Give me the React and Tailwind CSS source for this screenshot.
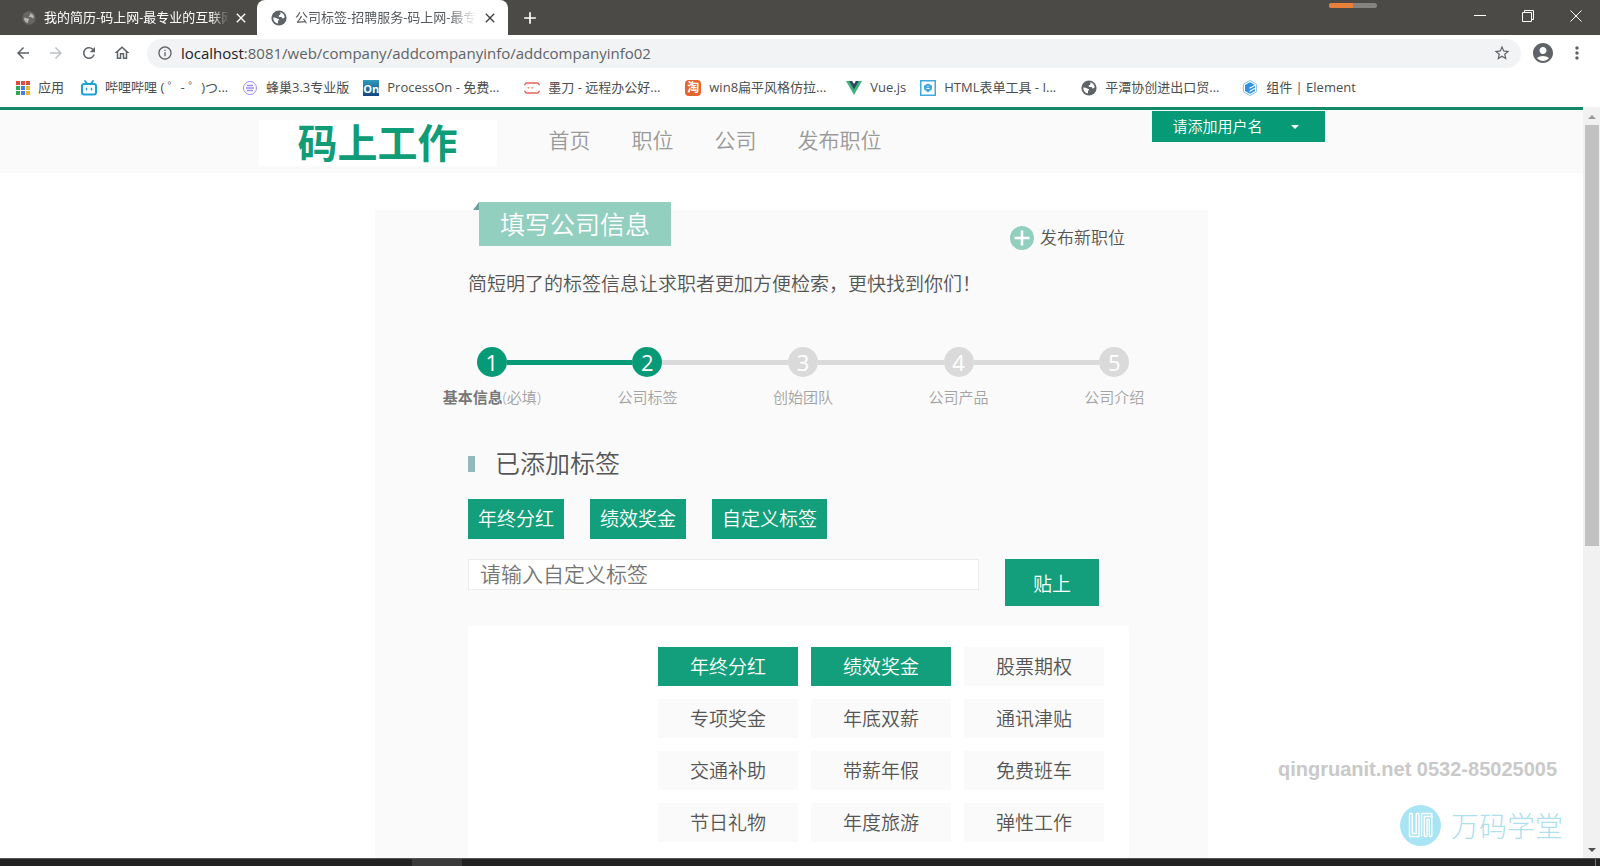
import React from "react";
import {
  MdArrowBack, MdArrowForward, MdRefresh, MdOutlineHome, MdInfoOutline,
  MdStarBorder, MdAccountCircle, MdMoreVert, MdClose, MdAdd,
} from "react-icons/md";

function Globe({ className }) {
  return (
    <svg viewBox="0 0 16 16" className={className} aria-hidden="true">
      <circle cx="8" cy="8" r="7.6" fill="currentColor" />
      <path d="M8.6 2.2c2.8.2 4.8 2.4 5.2 5-.9.3-1.2 1.300-2.100 1.200-.7-.1-.6-1.200-1.300-1.400-1-.2-1.600.2-2.400-.3-.7-.500-.1-1.400.6-1.600.6-.2.5-.9 1-1.400.4-.5-.5-.9-1-1.500z" fill="white" />
      <path d="M2.200 7.600c1.200.2 3 .2 4 .8.900.500 1.800.3 1.900 1.200.100.900-1 .8-1.100 1.600-.1.900.3 1.500-.3 2.400C4 13.100 2.200 10.600 2.200 7.600z" fill="white" />
    </svg>
  );
}

function AppsIcon() {
  const colors = ["#e04a3f", "#e04a3f", "#e04a3f", "#35a35a", "#3f7fe8", "#f2b32a", "#35a35a", "#3f7fe8", "#f2b32a"];
  return (
    <svg viewBox="0 0 14 14" className="size-3.5 shrink-0" aria-hidden="true">
      {colors.map((c, i) => (
        <rect key={i} x={(i % 3) * 5} y={Math.floor(i / 3) * 5} width="4" height="4" fill={c} />
      ))}
    </svg>
  );
}

function BiliIcon() {
  return (
    <svg viewBox="0 0 16 16" className="size-4" fill="none" stroke="#1aa3d4" strokeLinecap="round" aria-hidden="true">
      <rect x="1" y="4" width="14" height="10.500" rx="2" strokeWidth="2" />
      <path d="M4 1l2 2.500M12 1l-2 2.500" strokeWidth="1.800" />
      <path d="M5.500 8.500v1.200M10.500 8.500v1.200" strokeWidth="1.600" />
    </svg>
  );
}

function HiveIcon() {
  return (
    <svg viewBox="0 0 16 16" className="size-4" fill="none" stroke="#9d8ff2" aria-hidden="true">
      <circle cx="8" cy="8" r="6.500" />
      <path d="M5 5.500h6M4 8h8M5 10.500h6" strokeWidth="1.300" />
    </svg>
  );
}

function OnIcon() {
  return (
    <span className="flex size-4 items-center justify-center bg-linear-to-b from-[#2e9bbd] to-[#17457f] text-[11px] font-bold leading-none text-white">On</span>
  );
}

function ModaoIcon() {
  return (
    <svg viewBox="0 0 16 16" className="size-4" fill="none" stroke="#e8625c" strokeWidth="1.300" strokeLinecap="round" aria-hidden="true">
      <path d="M.8 4.800C1.200 3.500 2 3 3.200 3h9.600c1.200 0 2 .5 2.400 1.800M.8 11.200C1.200 12.500 2 13 3.200 13h9.600c1.200 0 2-.5 2.400-1.800M4 7.800h.6M8 7.800h.6" />
    </svg>
  );
}

function TaoIcon() {
  return (
    <span className="flex size-4 items-center justify-center rounded-sm bg-[#e8632c] text-xs font-bold leading-none text-white">淘</span>
  );
}

function VueIcon() {
  return (
    <svg viewBox="0 0 16 16" className="size-4" aria-hidden="true">
      <path d="M0 1h16L8 15z" fill="#3fb27f" />
      <path d="M3.200 1h9.600L8 9.400z" fill="#34495e" />
      <path d="M6.200 1h3.600L8 4z" fill="white" />
    </svg>
  );
}

function FormIcon() {
  return (
    <svg viewBox="0 0 16 16" className="size-4" fill="none" stroke="#3fa9e0" aria-hidden="true">
      <rect x=".75" y=".75" width="14.500" height="14.500" strokeWidth="1.500" />
      <path d="M8 4l3.500 1.800v3.400L8 12 4.500 9.200V5.800z" fill="#3fa9e0" />
      <path d="M6.500 8.500h3M8 6v1.200" stroke="white" />
    </svg>
  );
}

function ElementIcon() {
  return (
    <svg viewBox="0 0 16 16" className="size-4" aria-hidden="true">
      <path d="M8 .5l6.600 3.700v7.600L8 15.500l-6.600-3.700V4.200z" fill="none" stroke="#7cc3f5" />
      <path d="M8 2.200l5 2.900v5.800l-5 2.900-5-2.900V5.100z" fill="#2f8fe0" />
      <path d="M7.500 8.300l6-3.400M7.500 11.400l6-3.400" stroke="white" strokeWidth="1.200" />
    </svg>
  );
}

const bookmarks = [
  { icon: <BiliIcon />, text: "哔哩哔哩 ( ゜- ゜)つ...", wide: true },
  { icon: <HiveIcon />, text: "蜂巢3.3专业版" },
  { icon: <OnIcon />, text: "ProcessOn - 免费...", wide: true },
  { icon: <ModaoIcon />, text: "墨刀 - 远程办公好...", wide: true },
  { icon: <TaoIcon />, text: "win8扁平风格仿拉...", wide: true },
  { icon: <VueIcon />, text: "Vue.js" },
  { icon: <FormIcon />, text: "HTML表单工具 - I...", wide: true },
  { icon: <Globe className="size-4 text-[#5f6368]" />, text: "平潭协创进出口贸...", wide: true },
  { icon: <ElementIcon />, text: "组件 | Element" },
];

function TabStrip() {
  return (
    <div className="relative flex h-[35px] shrink-0 items-stretch bg-[#4b4a47] text-[13px]">
      <div className="flex w-[257px] items-center pl-[22px] pr-2 text-white">
        <Globe className="size-3.5 shrink-0 text-[#7b7a78] opacity-60" />
        <span className="ml-2 flex-1 overflow-hidden whitespace-nowrap mask-r-from-90%">我的简历-码上网-最专业的互联网</span>
        <button aria-label="关闭标签页" className="ml-1"><MdClose className="size-4" /></button>
      </div>
      <div className="flex w-[251px] items-center rounded-t-lg bg-white pl-3.5 pr-2.5 text-[#55585c]">
        <Globe className="size-4 shrink-0 text-[#5f6368]" />
        <span className="ml-2 flex-1 overflow-hidden whitespace-nowrap mask-r-from-85%">公司标签-招聘服务-码上网-最专</span>
        <button aria-label="关闭标签页" className="ml-1.5 text-[#3c4043]"><MdClose className="size-4" /></button>
      </div>
      <button aria-label="新标签页" className="ml-3 text-white"><MdAdd className="size-5" /></button>
      <div className="absolute right-[223px] top-[3px] flex h-[5px] w-12 overflow-hidden rounded-full bg-[#85837f]">
        <span className="w-1/2 bg-[#e8803c]" />
      </div>
      <div className="ml-auto flex items-center gap-9 pb-1 pr-[18px] text-white">
        <button aria-label="最小化">
          <svg viewBox="0 0 12 12" className="size-3" stroke="currentColor"><path d="M0 5.500h12" /></svg>
        </button>
        <button aria-label="还原">
          <svg viewBox="0 0 12 12" className="size-3" stroke="currentColor" fill="none"><path d="M.5 2.500h9v9h-9zM2.500 2.500v-2h9v9h-2" /></svg>
        </button>
        <button aria-label="关闭">
          <svg viewBox="0 0 12 12" className="size-3" stroke="currentColor"><path d="M.5.5l11 11M11.500.5l-11 11" /></svg>
        </button>
      </div>
    </div>
  );
}

function Toolbar() {
  return (
    <div className="flex h-9 shrink-0 items-center bg-white pl-3.5 pr-[13px] text-[#5f6368]">
      <div className="flex items-center gap-[15px]">
        <button aria-label="后退"><MdArrowBack className="size-[18px]" /></button>
        <button aria-label="前进" className="text-[#bdc1c6]"><MdArrowForward className="size-[18px]" /></button>
        <button aria-label="重新加载"><MdRefresh className="size-[18px]" /></button>
        <button aria-label="主页"><MdOutlineHome className="size-[18px]" /></button>
      </div>
      <div className="ml-4 flex h-[29px] flex-1 items-center rounded-full bg-[#f1f3f4] pl-2.5 pr-2.5">
        <MdInfoOutline className="size-4 shrink-0" />
        <span className="ml-2 flex-1 text-[15px]"><span className="text-[#202124]">localhost</span>:8081/web/company/addcompanyinfo/addcompanyinfo02</span>
        <button aria-label="收藏"><MdStarBorder className="size-[18px]" /></button>
      </div>
      <button aria-label="用户" className="ml-2.5"><MdAccountCircle className="size-6" /></button>
      <button aria-label="菜单" className="ml-3"><MdMoreVert className="size-5" /></button>
    </div>
  );
}

function BookmarkBar() {
  return (
    <nav className="flex h-9 shrink-0 items-center overflow-hidden whitespace-nowrap bg-white pb-0.5 pl-4 text-[13px] text-[#4a4d51]">
      <a href="#apps" className="flex w-[65px] shrink-0 items-center gap-2"><AppsIcon />应用</a>
      {bookmarks.map((b) => (
        <a key={b.text} href="#bookmark" className={b.wide ? "flex w-[161px] shrink-0 items-center gap-2" : "flex shrink-0 items-center gap-2 pr-3.5"}>
          <span className="shrink-0">{b.icon}</span>{b.text}
        </a>
      ))}
    </nav>
  );
}

function SiteHeader() {
  return (
    <header className="border-t-[3px] border-[#128a66] bg-[#fafafa]">
      <div className="mx-auto flex h-[63px] max-w-[1066px] items-start">
        <a href="#home" className="mt-2.5 flex h-[46px] w-[238px] items-center justify-center bg-white text-[40px] font-bold leading-none text-[#0f9c76]">码上工作</a>
        <nav className="ml-[52px] mt-3 flex gap-[41px] text-[21px] leading-9 text-[#999]">
          <a href="#home">首页</a>
          <a href="#jobs">职位</a>
          <a href="#companies">公司</a>
          <a href="#publish">发布职位</a>
        </nav>
        <button className="ml-auto mt-px flex h-[31px] w-[173px] items-center bg-[#079a77] pl-[21px] text-[15px] text-white">
          请添加用户名
          <svg viewBox="0 0 8 4" className="ml-7 h-1 w-2" fill="currentColor" aria-hidden="true"><path d="M0 0h8L4 4z" /></svg>
        </button>
      </div>
    </header>
  );
}

const steps = [
  { label: <><b className="font-bold text-[#777]">基本信息</b>(必填)</>, done: true },
  { label: "公司标签", done: true },
  { label: "创始团队" },
  { label: "公司产品" },
  { label: "公司介绍" },
];

function Steps() {
  return (
    <ol className="ml-[39px] mr-4 mt-[49px] grid grid-cols-5">
      {steps.map((s, i) => (
        <li key={i} className="flex flex-col items-center">
          <div className="flex w-full items-center">
            <span className={i === 0 ? "h-[5px] flex-1" : i === 1 ? "h-[5px] flex-1 bg-[#079a77]" : "h-[5px] flex-1 bg-[#dadada]"} />
            <span className={s.done ? "flex size-[30px] items-center justify-center rounded-full bg-[#079a77] text-[22px] font-medium leading-none text-white" : "flex size-[30px] items-center justify-center rounded-full bg-[#dadada] text-[22px] font-medium leading-none text-white"}>{i + 1}</span>
            <span className={i === 4 ? "h-[5px] flex-1" : i === 0 ? "h-[5px] flex-1 bg-[#079a77]" : "h-[5px] flex-1 bg-[#dadada]"} />
          </div>
          <span className="mt-2.5 whitespace-nowrap text-[15px] leading-5 text-[#a3a3a3]">{s.label}</span>
        </li>
      ))}
    </ol>
  );
}

const options = [
  "年终分红", "绩效奖金", "股票期权",
  "专项奖金", "年底双薪", "通讯津贴",
  "交通补助", "带薪年假", "免费班车",
  "节日礼物", "年度旅游", "弹性工作",
];
const added = ["年终分红", "绩效奖金", "自定义标签"];

function CompanyCard() {
  return (
    <section className="mx-auto mt-[37px] max-w-[833px] bg-[#fafafa]">
      <div className="flex h-10 items-start justify-between pl-[98px] pr-[83px]">
        <div className="-mt-2 flex items-start">
          <svg viewBox="0 0 6 8" className="h-2 w-1.5" aria-hidden="true"><path d="M6 0v8H0z" fill="#6f9f99" /></svg>
          <h1 className="flex h-11 w-48 items-center justify-center bg-[#93cfbf] pt-0.5 text-[25px] text-white">填写公司信息</h1>
        </div>
        <a href="#new" className="mt-4 flex h-6 items-center gap-1.5 text-[17px] text-[#555]">
          <svg viewBox="0 0 24 24" className="size-6" aria-hidden="true">
            <circle cx="12" cy="12" r="12" fill="#93cfbf" />
            <path d="M12 4.500v15M4.500 12h15" stroke="white" strokeWidth="2.500" />
          </svg>
          发布新职位
        </a>
      </div>
      <p className="ml-[93px] mt-5 whitespace-nowrap text-[19px] leading-7 text-[#555]">简短明了的标签信息让求职者更加方便检索，更快找到你们！</p>
      <Steps />
      <div className="ml-[93px] mr-[79px] mt-10">
        <h2 className="flex items-center gap-5 text-[25px] leading-8 text-[#555]"><i className="mt-0.5 h-4 w-[7px] bg-[#94b9bd]" />已添加标签</h2>
        <ul className="mt-5 flex gap-[26px] text-[19px] text-white">
          {added.map((t) => <li key={t} className="flex h-10 items-center bg-[#149f7c] px-2.5">{t}</li>)}
        </ul>
        <form className="mt-5 flex items-start gap-[26px]" onSubmit={(e) => e.preventDefault()}>
          <input type="text" aria-label="自定义标签" placeholder="请输入自定义标签" className="h-[31px] w-full max-w-[511px] border border-[#ececec] bg-white px-[11px] pb-0.5 text-[21px] leading-7 placeholder:text-[#757575]" />
          <button className="h-[47px] w-[94px] shrink-0 bg-[#149f7c] pt-1 text-[19px] text-white">贴上</button>
        </form>
        <ul className="mt-5 grid grid-cols-[140px_140px_140px] justify-end gap-[13px] bg-white pb-20 pr-[25px] pt-[21px] text-[19px]">
          {options.map((o, i) => (
            <li key={o} className="flex">
              <button className={i < 2 ? "h-[39px] w-full bg-[#149f7c] pt-0.5 text-white" : "h-[39px] w-full bg-[#fafafa] pt-0.5 text-[#555]"}>{o}</button>
            </li>
          ))}
        </ul>
      </div>
    </section>
  );
}

function Watermark() {
  return (
    <div className="pointer-events-none absolute bottom-3 right-5 flex flex-col items-end gap-[22px]">
      <p className="mr-1.5 font-['Liberation_Sans',Arial,sans-serif] text-xl font-bold text-[#c9c9c9]">qingruanit.net 0532-85025005</p>
      <div className="flex items-center gap-2.5 text-[28px] font-light text-[#aedfec]">
        <svg viewBox="0 0 41 41" className="size-[41px]" fill="none" stroke="white" strokeWidth="1.400" aria-hidden="true">
          <circle cx="20.500" cy="20.500" r="20.500" fill="#a9e4f4" stroke="none" />
          <path d="M9.500 8.500v23h9.500v-23M12.300 8.500v20h3.900v-20" />
          <path d="M21.500 31.500v-23M24.300 31.500v-20h7.500v20M27 31.500v-17h2.300v17" />
          <path d="M19 8.500h-2.800M9.500 8.500h2.800M24.300 31.500h2.700M29.300 31.500h2.500M21.500 8.500h10.300v4" />
        </svg>
        <span className="leading-10">万码学堂</span>
      </div>
    </div>
  );
}

function Scrollbar() {
  return (
    <div className="flex w-[17px] shrink-0 flex-col items-center bg-[#f1f1f1]" aria-hidden="true">
      <svg viewBox="0 0 8 4" className="mb-1.5 mt-2 h-1 w-2" fill="#9a9a9a"><path d="M0 4h8L4 0z" /></svg>
      <span className="h-[56%] w-3.5 bg-[#c1c1c1]" />
      <svg viewBox="0 0 8 4" className="mb-1.5 mt-auto h-1 w-2" fill="#505050"><path d="M0 0h8L4 4z" /></svg>
    </div>
  );
}

export default function App() {
  return (
    <div className="flex h-screen flex-col overflow-hidden bg-white font-['Open_Sans','Noto_Sans_CJK_SC',sans-serif]">
      <TabStrip />
      <Toolbar />
      <BookmarkBar />
      <div className="flex min-h-0 flex-1">
        <main className="relative min-w-0 flex-1 overflow-hidden bg-white font-[350]">
          <SiteHeader />
          <CompanyCard />
          <Watermark />
        </main>
        <Scrollbar />
      </div>
      <footer className="flex h-2 shrink-0 border-t border-[#555] bg-[#222]">
        <span className="ml-[412px] w-[50px] bg-[#3a3a3a]" />
        <span className="ml-auto mr-1 w-px bg-[#777]" />
      </footer>
    </div>
  );
}
